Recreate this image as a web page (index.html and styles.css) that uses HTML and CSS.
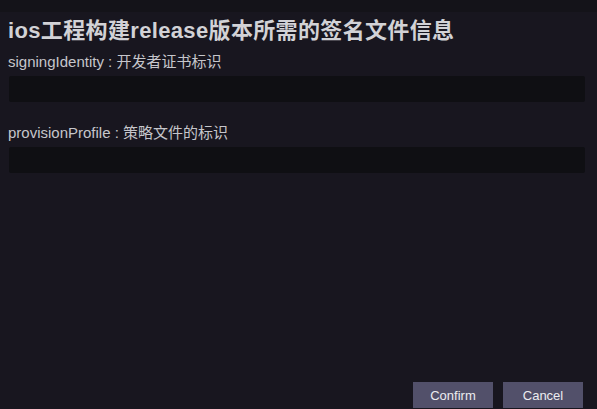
FILE: index.html
```html
<!DOCTYPE html>
<html lang="zh">
<head>
<meta charset="utf-8">
<title>Signing</title>
<link rel="stylesheet" href="styles.css">
</head>
<body>
<div class="page">
  <div class="topbar"></div>
  <div class="content">
    <h1 class="title">ios工程构建release版本所需的签名文件信息</h1>
    <label class="label">signingIdentity : 开发者证书标识</label>
    <input class="field" type="text">
    <label class="label label-second">provisionProfile : 策略文件的标识</label>
    <input class="field" type="text">
  </div>
  <div class="footer">
    <button class="btn">Confirm</button>
    <button class="btn">Cancel</button>
  </div>
</div>
</body>
</html>
```
FILE: styles.css
```css
html, body {
  margin: 0;
  padding: 0;
  height: 100%;
  background: #18161f;
}
.page {
  height: 100vh;
  display: flex;
  flex-direction: column;
  font-family: "Liberation Sans", "Noto Sans CJK SC", sans-serif;
  color: #c6c6cb;
}
.topbar {
  height: 12px;
  background: #141319;
  flex: none;
}
.content {
  display: flex;
  flex-direction: column;
  padding: 0 12px 0 8px;
}
.title {
  margin: 6px 0 0;
  font-size: 22px;
  line-height: 26px;
  font-weight: bold;
  letter-spacing: 0.35px;
  color: #d2d2d6;
}
.label {
  display: block;
  margin-top: 8px;
  font-size: 15px;
  line-height: 20px;
  color: #c6c6cb;
}
.label-second {
  margin-top: 21px;
}
.field {
  display: block;
  box-sizing: border-box;
  margin: 4px 0 0 1px;
  height: 26px;
  width: calc(100% - 1px);
  background: #0f0f13;
  border: none;
  border-radius: 2px;
  outline: none;
  padding: 0 6px;
  color: #ddd;
}
.footer {
  margin-top: auto;
  display: flex;
  justify-content: flex-end;
  gap: 10px;
  padding: 0 14px 1px 0;
}
.btn {
  width: 80px;
  height: 26px;
  border: none;
  border-radius: 0;
  background: #52506a;
  color: #ececf0;
  font-family: "Liberation Sans", sans-serif;
  font-size: 13px;
  padding: 0;
}
```
